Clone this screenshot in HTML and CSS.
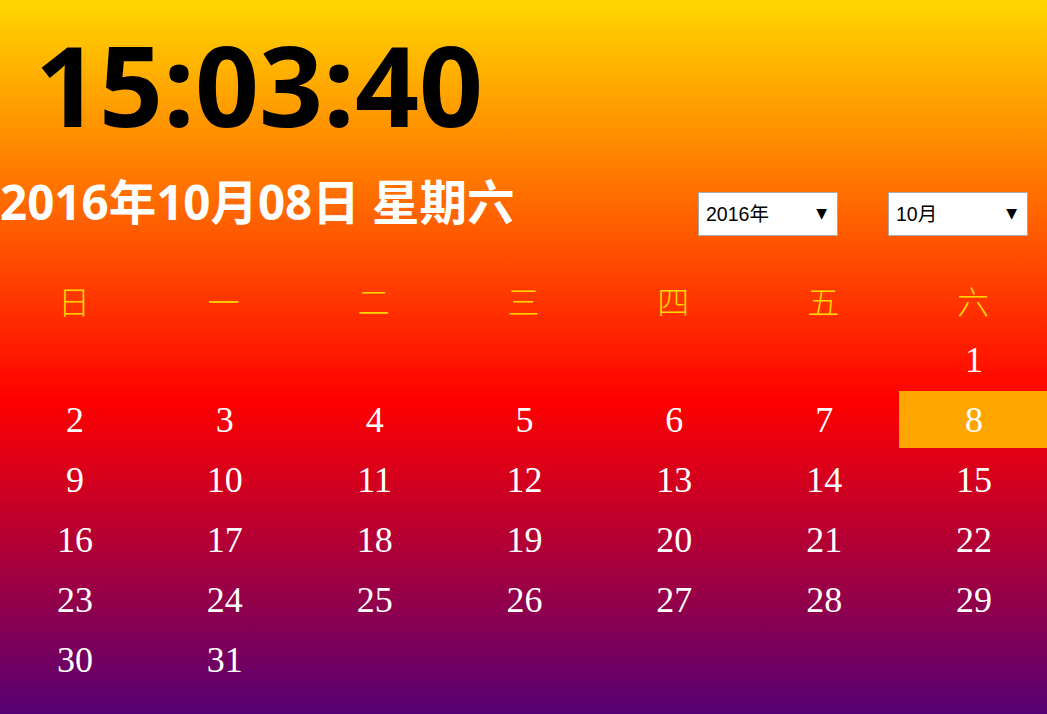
FILE: index.html
```html
<!DOCTYPE html>
<html lang="zh-CN">
<head>
<meta charset="utf-8">
<title>时钟日历</title>
<link rel="stylesheet" href="styles.css">
</head>
<body>
<div class="page">
  <h1 class="clock">15:03:40</h1>
  <div class="head">
    <h2 class="date">2016年10月08日 星期六</h2>
    <div class="selects">
      <div class="sel-wrap">
        <select class="sel"><option>2016年</option></select>
      </div>
      <div class="sel-wrap">
        <select class="sel"><option>10月</option></select>
      </div>
    </div>
  </div>
  <div class="cal">
    <div class="wd">日</div><div class="wd">一</div><div class="wd">二</div><div class="wd">三</div><div class="wd">四</div><div class="wd">五</div><div class="wd">六</div>
    <div class="day"></div><div class="day"></div><div class="day"></div><div class="day"></div><div class="day"></div><div class="day"></div><div class="day">1</div>
    <div class="day">2</div><div class="day">3</div><div class="day">4</div><div class="day">5</div><div class="day">6</div><div class="day">7</div><div class="day today">8</div>
    <div class="day">9</div><div class="day">10</div><div class="day">11</div><div class="day">12</div><div class="day">13</div><div class="day">14</div><div class="day">15</div>
    <div class="day">16</div><div class="day">17</div><div class="day">18</div><div class="day">19</div><div class="day">20</div><div class="day">21</div><div class="day">22</div>
    <div class="day">23</div><div class="day">24</div><div class="day">25</div><div class="day">26</div><div class="day">27</div><div class="day">28</div><div class="day">29</div>
    <div class="day">30</div><div class="day">31</div>
  </div>
</div>
</body>
</html>
```
FILE: styles.css
```css
html, body {
  margin: 0;
  padding: 0;
}
body {
  min-height: 714px;
  background: linear-gradient(to bottom, #ffd700 0%, #ff0000 56%, #560074 100%);
  font-family: "Open Sans", "Noto Sans CJK SC", sans-serif;
  overflow: hidden;
}
.page {
  height: 714px;
}
.clock {
  margin: 0;
  padding: 28px 0 0 35px;
  font-family: "Open Sans", sans-serif;
  font-weight: 700;
  font-size: 112px;
  line-height: 112px;
  color: #000;
}
.head {
  display: flex;
  align-items: flex-start;
  margin-top: 39px;
  height: 46px;
}
.date {
  flex: 1;
  margin: 0;
  font-family: "Open Sans", "Noto Sans CJK SC", sans-serif;
  font-weight: 700;
  font-size: 47.5px;
  line-height: 46px;
  color: #fff;
  white-space: nowrap;
}
.selects {
  display: flex;
  gap: 50px;
  margin-top: 13px;
  padding-right: 19px;
}
.sel-wrap {
  position: relative;
  width: 140px;
  height: 44px;
}
.sel-wrap::after {
  content: "▼";
  position: absolute;
  right: 11px;
  top: 13px;
  font-size: 14px;
  line-height: 16px;
  color: #000;
  pointer-events: none;
  font-family: "DejaVu Sans", sans-serif;
}
.sel {
  -webkit-appearance: none;
  appearance: none;
  box-sizing: border-box;
  width: 100%;
  height: 100%;
  margin: 0;
  border: 1px solid #a9a9a9;
  border-radius: 0;
  background: #fff;
  padding: 0 0 0 7px;
  font-family: "Liberation Sans", "Noto Sans CJK SC", sans-serif;
  font-size: 19.5px;
  color: #000;
}
.cal {
  display: grid;
  grid-template-columns: repeat(7, 1fr);
  grid-auto-rows: 57px;
  column-gap: 2px;
  row-gap: 3px;
  margin-top: 46px;
}
.wd, .day {
  display: flex;
  align-items: center;
  justify-content: center;
}
.wd {
  font-family: "Noto Sans CJK SC", sans-serif;
  font-weight: 300;
  font-size: 32px;
  color: #ffd700;
}
.day {
  font-family: "Liberation Serif", serif;
  font-size: 36px;
  color: #fff;
  padding-left: 2px;
}
.today {
  background: #ffa500;
}
```
